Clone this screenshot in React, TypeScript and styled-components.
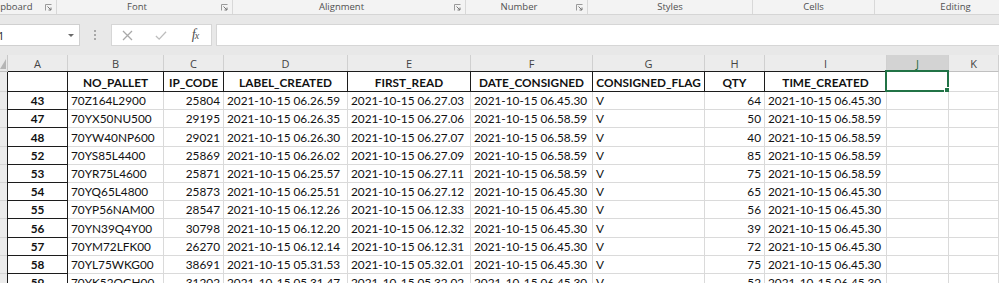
import React from 'react';
import styled, { createGlobalStyle } from 'styled-components';

const GlobalStyle = createGlobalStyle`
  body {
    margin: 0;
    background: #fff;
    overflow: hidden;
  }
`;

const COLUMNS = '8px 60px 96px 60px 124px 123px 122px 112px 60px 122px 62px 1fr';
const LETTERS = ['A', 'B', 'C', 'D', 'E', 'F', 'G', 'H', 'I', 'J', 'K'];

const HEADINGS = ['', 'NO_PALLET', 'IP_CODE', 'LABEL_CREATED', 'FIRST_READ', 'DATE_CONSIGNED', 'CONSIGNED_FLAG', 'QTY', 'TIME_CREATED'];

const ROWS: string[][] = [
  ['43', '70Z164L2900', '25804', '2021-10-15 06.26.59', '2021-10-15 06.27.03', '2021-10-15 06.45.30', 'V', '64', '2021-10-15 06.45.30'],
  ['47', '70YX50NU500', '29195', '2021-10-15 06.26.35', '2021-10-15 06.27.06', '2021-10-15 06.58.59', 'V', '50', '2021-10-15 06.58.59'],
  ['48', '70YW40NP600', '29021', '2021-10-15 06.26.30', '2021-10-15 06.27.07', '2021-10-15 06.58.59', 'V', '40', '2021-10-15 06.58.59'],
  ['52', '70YS85L4400', '25869', '2021-10-15 06.26.02', '2021-10-15 06.27.09', '2021-10-15 06.58.59', 'V', '85', '2021-10-15 06.58.59'],
  ['53', '70YR75L4600', '25871', '2021-10-15 06.25.57', '2021-10-15 06.27.11', '2021-10-15 06.58.59', 'V', '75', '2021-10-15 06.58.59'],
  ['54', '70YQ65L4800', '25873', '2021-10-15 06.25.51', '2021-10-15 06.27.12', '2021-10-15 06.45.30', 'V', '65', '2021-10-15 06.45.30'],
  ['55', '70YP56NAM00', '28547', '2021-10-15 06.12.26', '2021-10-15 06.12.33', '2021-10-15 06.45.30', 'V', '56', '2021-10-15 06.45.30'],
  ['56', '70YN39Q4Y00', '30798', '2021-10-15 06.12.20', '2021-10-15 06.12.32', '2021-10-15 06.45.30', 'V', '39', '2021-10-15 06.45.30'],
  ['57', '70YM72LFK00', '26270', '2021-10-15 06.12.14', '2021-10-15 06.12.31', '2021-10-15 06.45.30', 'V', '72', '2021-10-15 06.45.30'],
  ['58', '70YL75WKG00', '38691', '2021-10-15 05.31.53', '2021-10-15 05.32.01', '2021-10-15 06.45.30', 'V', '75', '2021-10-15 06.45.30'],
  ['59', '70YK52QGH00', '31202', '2021-10-15 05.31.47', '2021-10-15 05.32.02', '2021-10-15 06.45.30', 'V', '52', '2021-10-15 06.45.30'],
];

// which data columns are numbers (right aligned)
const NUMERIC = [2, 7];

const Page = styled.div`
  width: 999px;
  height: 283px;
  overflow: hidden;
  font-family: "Open Sans", "Noto Sans", sans-serif;
`;

/* ---------- ribbon group captions ---------- */

const GroupBar = styled.div`
  display: flex;
  height: 15px;
  box-sizing: border-box;
  background: #f3f3f3;
  border-bottom: 1px solid #d5d5d5;
`;

const Group = styled.div<{ $width: number; $shift?: number }>`
  display: flex;
  flex: 0 0 ${({ $width }) => $width}px;
  margin-left: ${({ $shift }) => $shift ?? 0}px;
  height: 14px;
  box-sizing: border-box;
  border-right: 1px solid #d8d8d8;
`;

const GroupLabel = styled.div`
  flex: 1;
  text-align: center;
  font-size: 9.5px;
  line-height: 14px;
  color: #505050;
  white-space: nowrap;
`;

const Launcher = styled.div`
  display: flex;
  align-items: center;
  justify-content: center;
  width: 15px;
`;

const LauncherIcon = () => (
  <svg width="7" height="7" viewBox="0 0 7 7">
    <path d="M0.5 6.5V0.5H6.5" fill="none" stroke="#9a9a9a" strokeWidth="1" />
    <path d="M2.5 2.5L6 6M6 3.5V6H3.5" fill="none" stroke="#777" strokeWidth="1" />
  </svg>
);

/* ---------- formula bar ---------- */

const FormulaBar = styled.div`
  display: flex;
  align-items: flex-start;
  height: 40px;
  padding-top: 9px;
  box-sizing: border-box;
  background: #e8e8e8;
`;

const NameBox = styled.div`
  display: flex;
  align-items: center;
  justify-content: space-between;
  width: 80px;
  height: 22px;
  box-sizing: border-box;
  padding-right: 5px;
  background: #fff;
  border: 1px solid #d0d0d0;
  border-left: none;
  font-size: 11px;
  color: #222;
`;

const NameText = styled.span`
  margin-left: -5px;
`;

const Caret = styled.span`
  width: 0;
  height: 0;
  border-left: 3px solid transparent;
  border-right: 3px solid transparent;
  border-top: 3px solid #6a6a6a;
`;

const Grip = styled.div`
  display: flex;
  flex-direction: column;
  gap: 2px;
  margin: 6px 0 0 14px;
  width: 3px;
`;

const GripDot = styled.span`
  width: 2px;
  height: 2px;
  background: #a8a8a8;
`;

const FxBox = styled.div`
  display: flex;
  align-items: center;
  gap: 22px;
  margin-left: 14px;
  padding-left: 9px;
  width: 101px;
  height: 22px;
  box-sizing: border-box;
  background: #fff;
  border: 1px solid #d6d6d6;
`;

const FxButton = styled.span`
  display: flex;
  align-items: center;
  justify-content: center;
  width: 12px;
  height: 12px;
`;

const FxGlyph = styled.span`
  font-family: "Liberation Serif", "DejaVu Serif", serif;
  font-style: italic;
  font-size: 14px;
  color: #505050;
  letter-spacing: -1px;

  small {
    font-size: 10px;
  }
`;

const FormulaInput = styled.div`
  flex: 1;
  margin-left: 4px;
  height: 22px;
  box-sizing: border-box;
  background: #fff;
  border: 1px solid #d6d6d6;
  border-right: none;
`;

/* ---------- sheet ---------- */

const Row = styled.div<{ $h: number }>`
  display: grid;
  grid-template-columns: ${COLUMNS};
  height: ${({ $h }) => $h}px;
`;

const Corner = styled.div`
  display: flex;
  align-items: flex-end;
  background: #e8e8e8;
  border-right: 1px solid #c8c8c8;
  border-bottom: 1px solid #c0c0c0;
`;

const ColHead = styled.div<{ $selected?: boolean }>`
  display: flex;
  align-items: center;
  justify-content: center;
  box-sizing: border-box;
  font-size: 11px;
  color: ${({ $selected }) => ($selected ? '#1f6b41' : '#444')};
  background: ${({ $selected }) => ($selected ? '#d3d3d3' : '#ececec')};
  border-right: 1px solid #d0d0d0;
  border-bottom: 1px solid ${({ $selected }) => ($selected ? '#217346' : '#c0c0c0')};
`;

const RowHead = styled.div`
  background: #ececec;
  border-right: 1px solid #c8c8c8;
  border-bottom: 1px solid #d6d6d6;
  box-sizing: border-box;
`;

type Align = 'left' | 'right' | 'center';

const Cell = styled.div<{ $align?: Align; $bold?: boolean; $boxed?: boolean; $top?: boolean; $left?: boolean }>`
  position: relative;
  display: flex;
  align-items: flex-end;
  justify-content: ${({ $align }) =>
    $align === 'right' ? 'flex-end' : $align === 'center' ? 'center' : 'flex-start'};
  padding: 0 3px 1px 3px;
  box-sizing: border-box;
  min-width: 0;
  white-space: nowrap;
  font-family: Lato, "Liberation Sans", sans-serif;
  font-size: 11.8px;
  line-height: 15px;
  font-weight: ${({ $bold }) => ($bold ? 700 : 400)};
  color: #111;
  background: #fff;
  border-right: 1px solid ${({ $boxed }) => ($boxed ? '#1c1c1c' : '#dadada')};
  border-bottom: 1px solid ${({ $boxed }) => ($boxed ? '#1c1c1c' : '#dadada')};
  box-shadow: ${({ $top, $left }) =>
    [$top ? '0 -1px 0 #1c1c1c' : '', $left ? '-1px 0 0 #1c1c1c' : ''].filter(Boolean).join(', ') || 'none'};
`;

const Selection = styled.div`
  position: absolute;
  top: -2px;
  left: -2px;
  right: -1px;
  bottom: -1px;
  border: 2px solid #217346;
  pointer-events: none;
`;

const FillHandle = styled.span`
  position: absolute;
  right: -4px;
  bottom: -4px;
  width: 5px;
  height: 5px;
  background: #217346;
  border: 1px solid #fff;
`;

const groups = [
  { label: 'Clipboard', width: 76, shift: -19, launcher: true },
  { label: 'Font', width: 176, launcher: true },
  { label: 'Alignment', width: 233, launcher: true },
  { label: 'Number', width: 122, launcher: true },
  { label: 'Styles', width: 165 },
  { label: 'Cells', width: 122 },
  { label: 'Editing', width: 162 },
];

export default function App() {
  return (
    <Page>
      <GlobalStyle />
      <GroupBar>
        {groups.map((g) => (
          <Group key={g.label} $width={g.width} $shift={g.shift}>
            <GroupLabel>{g.label}</GroupLabel>
            {g.launcher && (
              <Launcher>
                <LauncherIcon />
              </Launcher>
            )}
          </Group>
        ))}
      </GroupBar>

      <FormulaBar>
        <NameBox>
          <NameText>J1</NameText>
          <Caret />
        </NameBox>
        <Grip>
          <GripDot />
          <GripDot />
          <GripDot />
        </Grip>
        <FxBox>
          <FxButton>
            <svg width="11" height="11" viewBox="0 0 11 11">
              <path d="M1 1L10 10M10 1L1 10" stroke="#a9a9a9" strokeWidth="1.3" />
            </svg>
          </FxButton>
          <FxButton>
            <svg width="13" height="11" viewBox="0 0 13 11">
              <path d="M1 6L4.5 9.5L12 1.5" fill="none" stroke="#bdbdbd" strokeWidth="1.4" />
            </svg>
          </FxButton>
          <FxButton>
            <FxGlyph>
              f<small>x</small>
            </FxGlyph>
          </FxButton>
        </FxBox>
        <FormulaInput />
      </FormulaBar>

      <Row $h={17}>
        <Corner>
          <svg width="7" height="16" viewBox="0 0 7 16">
            <polygon points="0,14 6,14 6,4" fill="#b5b5b5" />
          </svg>
        </Corner>
        {LETTERS.map((l) => (
          <ColHead key={l} $selected={l === 'J'}>
            {l}
          </ColHead>
        ))}
      </Row>

      <Row $h={20}>
        <RowHead />
        {HEADINGS.map((h, i) => (
          <Cell key={i} $align="center" $bold $boxed $top $left={i === 0}>
            {h}
          </Cell>
        ))}
        <Cell>
          <Selection>
            <FillHandle />
          </Selection>
        </Cell>
        <Cell />
      </Row>

      {ROWS.map((r) => (
        <Row key={r[0]} $h={18.2}>
          <RowHead />
          {r.map((v, i) => (
            <Cell
              key={i}
              $align={i === 0 ? 'center' : NUMERIC.includes(i) ? 'right' : 'left'}
              $bold={i === 0}
              $boxed={i === 0}
              $left={i === 0}
            >
              {v}
            </Cell>
          ))}
          <Cell />
          <Cell />
        </Row>
      ))}
    </Page>
  );
}
